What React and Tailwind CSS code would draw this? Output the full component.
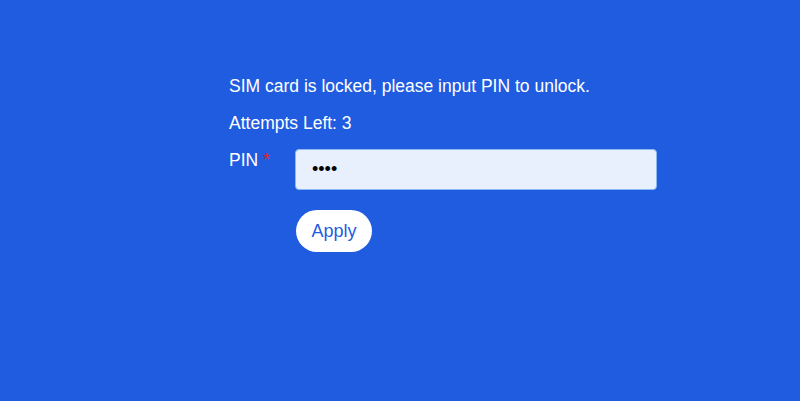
export default function App() {
  return (
    <div
      className="h-[401px] w-full bg-[#1f5ce0] text-white"
      style={{ fontFamily: '"Liberation Sans", Arial, sans-serif' }}
    >
      <div className="pl-[229px] pt-[74px]">
        <p className="text-[17.5px] leading-[24px]">
          SIM card is locked, please input PIN to unlock.
        </p>
        <p className="mt-[13px] text-[17.5px] leading-[24px]">Attempts Left: 3</p>
        <div className="mt-[13px] flex items-start">
          <label className="w-[66px] text-[17.5px] leading-[24px]">
            PIN <span className="text-[#e0202a]">*</span>
          </label>
          <div className="mt-[1px] flex flex-col">
            <input
              type="password"
              defaultValue="1234"
              className="h-[41px] w-[362px] rounded-[4px] border border-[#8ab8f0] bg-[#e8f0fe] px-4 text-[18px] text-black outline-none"
            />
            <button className="ml-[1px] mt-[20px] h-[42px] w-[76px] rounded-full bg-white text-[18px] text-[#1f5ce0]">
              Apply
            </button>
          </div>
        </div>
      </div>
    </div>
  );
}
